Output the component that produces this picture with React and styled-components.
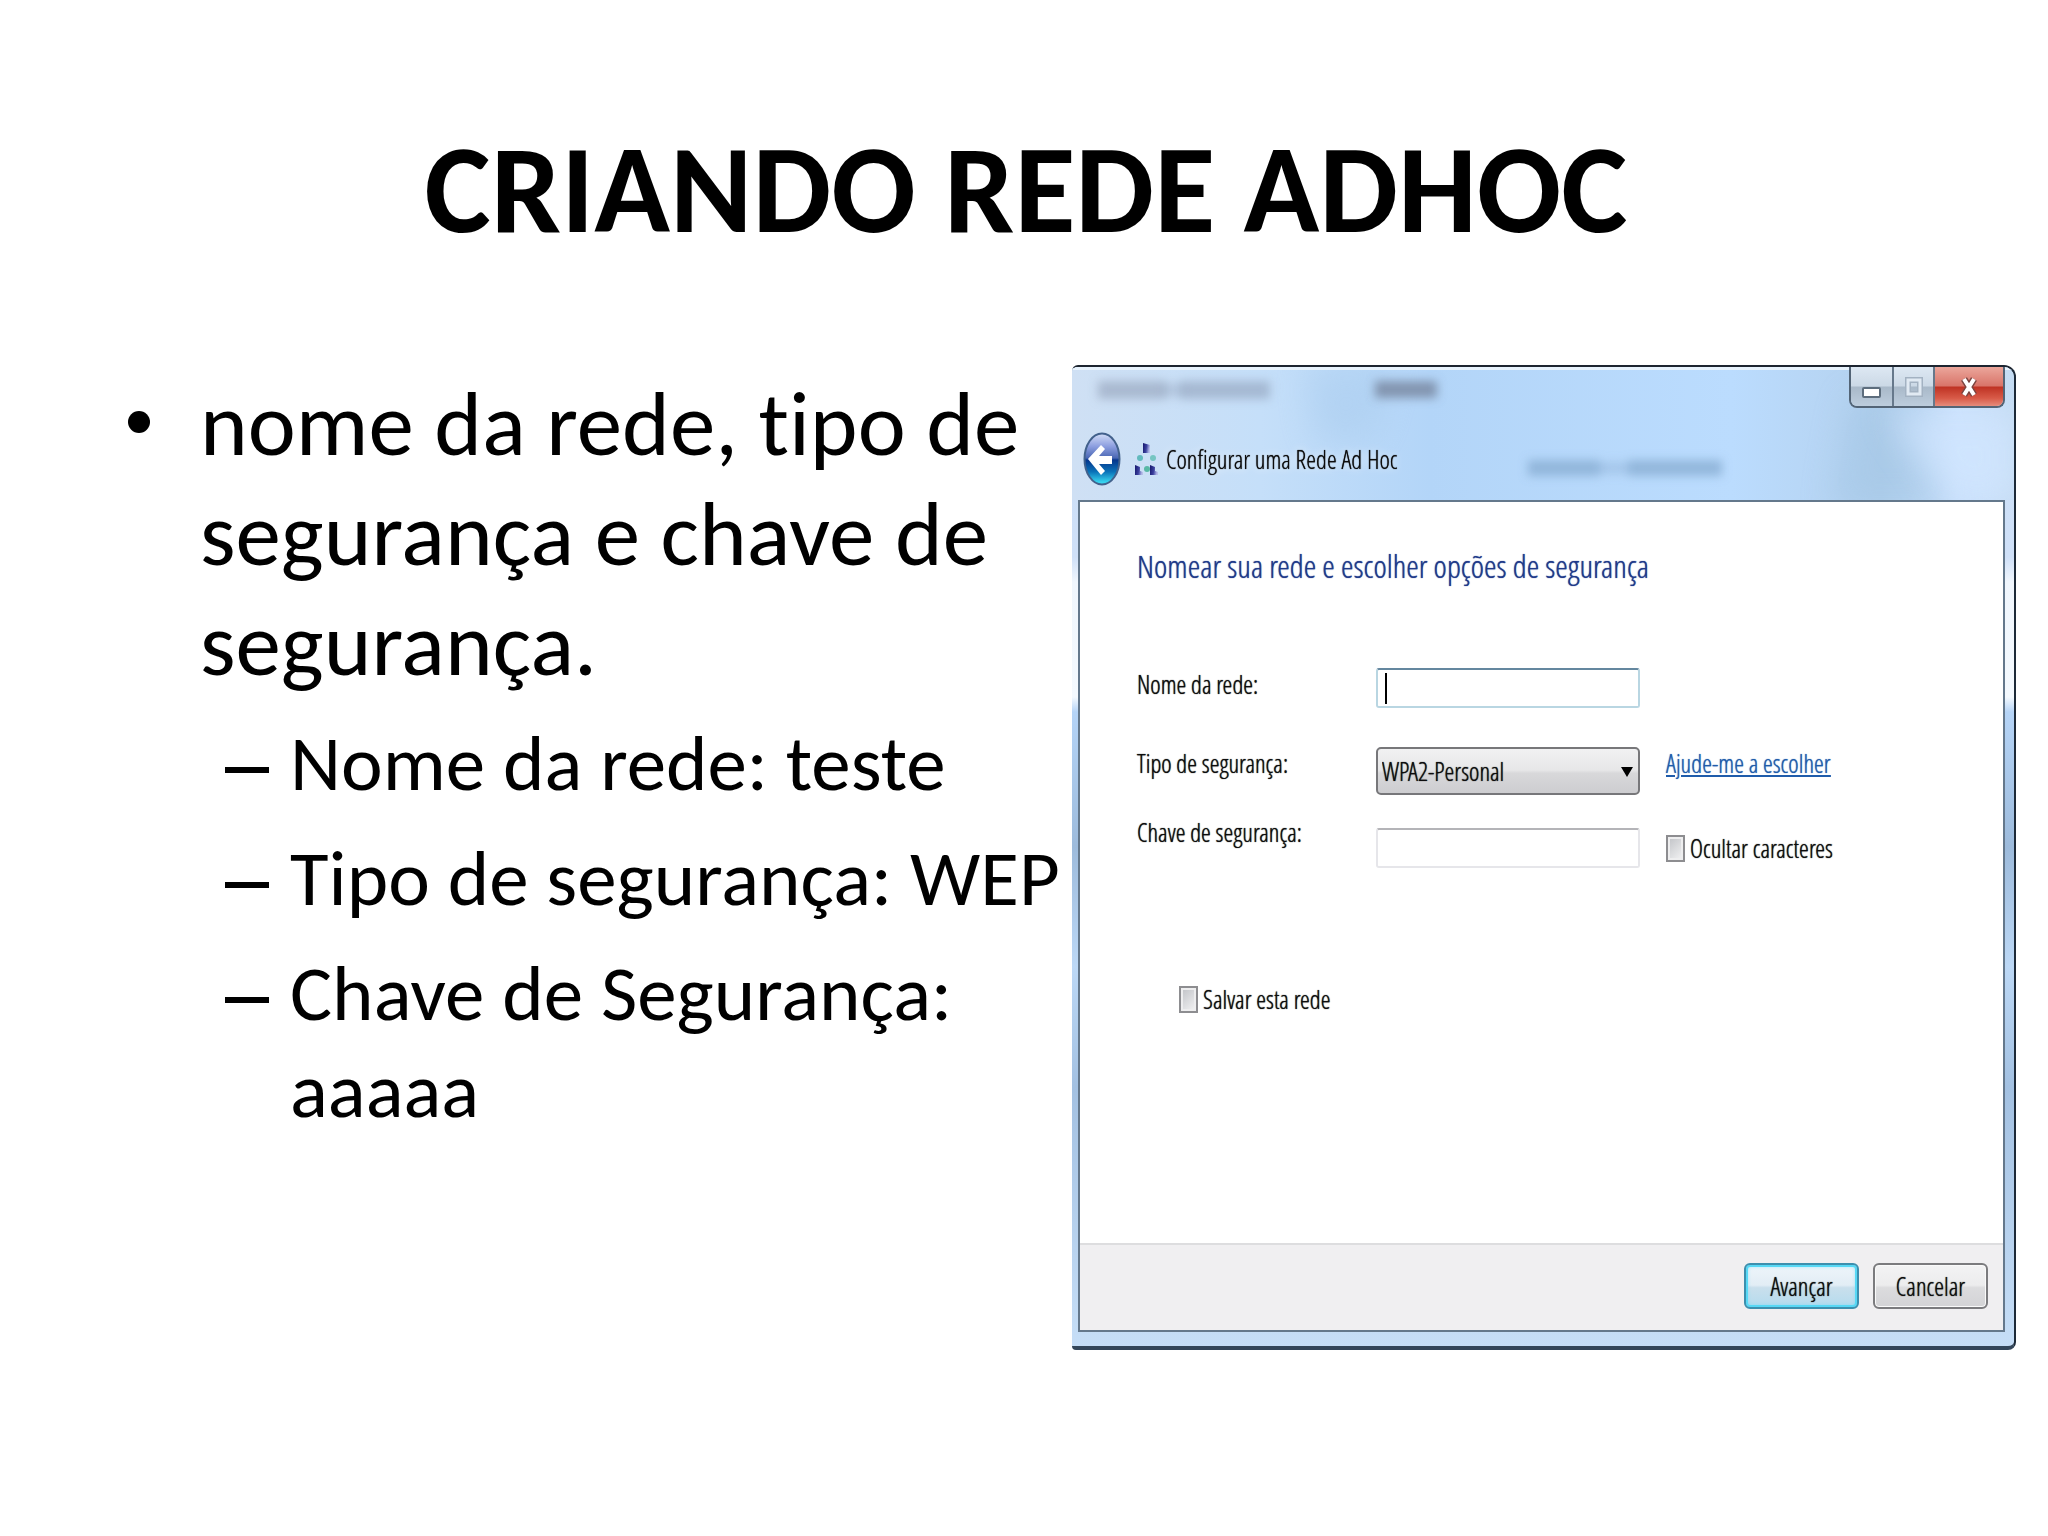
import React from "react";
import styled, { createGlobalStyle, css } from "styled-components";

const GlobalStyle = createGlobalStyle`
  * {
    box-sizing: border-box;
  }
  body {
    margin: 0;
    background: #ffffff;
    color: #000000;
    font-family: Carlito, Lato, sans-serif;
    font-variant-ligatures: none;
  }
`;

const uiFont = css`
  font-family: "Open Sans Condensed Light", "Open Sans Condensed", "Open Sans", sans-serif;
  font-size: 25px;
  line-height: 28px;
  font-weight: 300;
  text-shadow: 0 0 1px currentColor;
`;

const Slide = styled.main`
  min-height: 100vh;
  padding: 120px 32px 120px 128px;
`;

const Title = styled.h1`
  margin: 0 92px 105px 0;
  text-align: center;
  font-size: 125px;
  line-height: 140px;
  font-weight: 700;
`;

const Columns = styled.div`
  display: grid;
  grid-template-columns: minmax(0, 1fr) minmax(0, 1fr);
  align-items: start;
`;

const Topics = styled.ul`
  margin: 0;
  padding: 4px 0 0;
  list-style: none;
  font-size: 91px;
  line-height: 110px;
`;

const Topic = styled.li`
  display: grid;
  grid-template-columns: 72px minmax(0, 1fr);
`;

const Dot = styled.span`
  width: 22px;
  height: 22px;
  margin-top: 42px;
  border-radius: 50%;
  background: #000000;
`;

const SubTopics = styled.ul`
  margin: 0;
  padding: 16px 0 0 97px;
  list-style: none;
  font-size: 79px;
  line-height: 97px;
`;

const SubTopic = styled.li`
  display: grid;
  grid-template-columns: 65px minmax(0, 1fr);
  margin-bottom: 18px;
`;

const Dash = styled.span`
  width: 44px;
  height: 6px;
  margin-top: 52px;
  background: #000000;
`;

const SubText = styled.span`
  white-space: pre-line;
`;

const Dialog = styled.section`
  ${uiFont}
  position: relative;
  display: flex;
  flex-direction: column;
  overflow: hidden;
  padding: 0 9px 14px 6px;
  border-top: 2px solid #1d2530;
  border-right: 2px solid #1d2a38;
  border-bottom: 4px solid #33465a;
  border-radius: 6px 12px 8px 4px;
  color: #0c0c0c;
  background: linear-gradient(
    #c9dff6 0,
    #cfe0f8 190px,
    #f0f6fd 215px,
    #f4f9fe 330px,
    #b5d4f7 345px,
    #9dbbdc 480px,
    #bcd8f6 600px,
    #a3c1e2 720px,
    #c6def7 100%
  );
`;

const Glass = styled.svg`
  position: absolute;
  top: 0;
  left: 0;
  width: 100%;
  height: 133px;
`;

const TitleBar = styled.header`
  position: relative;
  height: 133px;
`;

const WindowButtons = styled.div`
  position: absolute;
  top: 0;
  right: 0;
  display: flex;
  height: 41px;
  overflow: hidden;
  border: 2px solid #536476;
  border-top: 0;
  border-radius: 0 0 8px 8px;
`;

const WindowButton = styled.button`
  display: grid;
  place-items: center;
  width: ${(p) => (p.$close ? "70px" : "41px")};
  padding: 0;
  border: 0;
  border-left: ${(p) => (p.$first ? "0" : "2px solid #66788b")};
  background: ${(p) =>
    p.$close
      ? "linear-gradient(#eba69b 0, #d9756a 48%, #bf3324 52%, #d85a48 80%, #e58c7c 100%)"
      : "linear-gradient(#dde8f3 0, #ccd9e6 48%, #a9b9c9 52%, #bdcddd 100%)"};
`;

const WizardTitle = styled.div`
  display: flex;
  align-items: center;
  padding: 65px 0 0 5px;
`;

const BackButton = styled.button`
  width: 38px;
  height: 54px;
  padding: 0;
  border: 0;
  background: none;
`;

const NetworkIcon = styled.svg`
  margin: 0 7px 0 14px;
`;

const WizardName = styled.span`
  text-shadow: 0 0 1px currentColor, 0 0 8px #ffffff;
`;

const Pane = styled.form`
  position: relative;
  display: flex;
  flex-direction: column;
  border: 2px solid #64788c;
  background: #ffffff;
`;

const PaneBody = styled.div`
  padding: 46px 57px 0 57px;
  min-height: 741px;
`;

const Heading = styled.h2`
  margin: 0 0 84px;
  color: #1f3a8a;
  font-size: 32px;
  line-height: 36px;
  font-weight: 300;
`;

const Field = styled.div`
  display: grid;
  grid-template-columns: 239px 264px 1fr;
  align-items: start;
  margin-bottom: ${(p) => p.$after}px;
`;

const FieldLabel = styled.label`
  padding-top: ${(p) => (p.$raised ? "0" : "2px")};
`;

const TextBox = styled.input`
  ${uiFont}
  width: 100%;
  height: 40px;
  margin-top: ${(p) => (p.$active ? "0" : "10px")};
  padding: 0 8px;
  outline: 0;
  border: 2px solid ${(p) => (p.$active ? "#b9d6e2" : "#e6e6ea")};
  border-top-color: ${(p) => (p.$active ? "#64879f" : "#b4b4b8")};
  border-radius: 3px;
  background: ${(p) =>
    p.$active
      ? "linear-gradient(#000000, #000000) 7px 3px / 2px 31px no-repeat #ffffff"
      : "#ffffff"};
`;

const SelectBox = styled.div`
  position: relative;
`;

const Select = styled.select`
  ${uiFont}
  appearance: none;
  width: 100%;
  height: 48px;
  padding: 0 30px 0 4px;
  border: 2px solid #77777a;
  border-radius: 5px;
  color: #0c0c0c;
  background: linear-gradient(#f1f1f2 0, #e7e7e8 48%, #d8d8da 55%, #cdcdd0 100%);
`;

const SelectArrow = styled.svg`
  position: absolute;
  top: 20px;
  right: 7px;
  pointer-events: none;
`;

const HelpLink = styled.a`
  justify-self: start;
  margin: 2px 0 0 26px;
  color: #1f5cab;
`;

const Check = styled.label`
  display: flex;
  align-items: center;
  gap: 5px;
  margin: ${(p) => (p.$save ? "117px 0 0 42px" : "16px 0 0 26px")};
`;

const CheckBox = styled.input`
  appearance: none;
  flex: none;
  width: 19px;
  height: 27px;
  margin: 0;
  border: 2px solid #8d8d90;
  background: linear-gradient(135deg, #bfc1c5, #f4f4f5);
  box-shadow: inset 0 0 0 2px #eeeeef;
`;

const Footer = styled.footer`
  display: flex;
  justify-content: flex-end;
  gap: 14px;
  height: 87px;
  padding: 18px 15px 0;
  border-top: 2px solid #dddddf;
  background: #f0eff1;
`;

const Button = styled.button`
  ${uiFont}
  width: 115px;
  height: 46px;
  padding: 0;
  border: 2px solid ${(p) => (p.$primary ? "#3c8fae" : "#7b7b7e")};
  border-radius: 6px;
  color: #0c0c0c;
  background: ${(p) =>
    p.$primary
      ? "linear-gradient(#eef5fa 0, #e2edf5 48%, #c9dfec 54%, #b4dbee 100%)"
      : "linear-gradient(#f3f3f4 0, #ececed 48%, #dcdcde 54%, #d3d3d6 100%)"};
  box-shadow: ${(p) =>
    p.$primary ? "inset 0 0 0 2px #57d8f5, inset 0 0 5px #57d8f5" : "inset 0 0 0 1px #fafafa"};
`;

const subTopics = [
  "Nome da rede: teste",
  "Tipo de segurança: WEP",
  "Chave de Segurança:\naaaaa",
];

const GlassBackdrop = () => (
  <Glass viewBox="0 0 942 133" preserveAspectRatio="none" aria-hidden="true">
    <defs>
      <linearGradient id="glass">
        <stop offset="0" stopColor="#cfe0f4" />
        <stop offset="0.2" stopColor="#c5dff9" />
        <stop offset="0.38" stopColor="#b3d5f8" />
        <stop offset="0.7" stopColor="#bbdcfe" />
        <stop offset="0.86" stopColor="#b4d1ee" />
        <stop offset="0.94" stopColor="#cbe2fd" />
        <stop offset="1" stopColor="#c5dcf3" />
      </linearGradient>
      <filter id="soft" x="-20%" y="-80%" width="140%" height="260%">
        <feGaussianBlur stdDeviation="5" />
      </filter>
      <filter id="haze" x="-60%" y="-60%" width="220%" height="220%">
        <feGaussianBlur stdDeviation="16" />
      </filter>
    </defs>
    <rect width="942" height="133" fill="url(#glass)" />
    <path d="M232 0h90l-20 75h-60z" fill="#a4c8ea" opacity="0.4" filter="url(#haze)" />
    <path d="M780 30l70 0 30 110h-120z" fill="#9fc3e2" opacity="0.5" filter="url(#haze)" />
    <path d="M815 45l60 90h70V45z" fill="#d2e6ff" opacity="0.7" filter="url(#haze)" />
    <g filter="url(#soft)">
      <rect x="26" y="14" width="68" height="18" fill="#96a5bd" opacity="0.65" />
      <rect x="108" y="14" width="90" height="18" fill="#94a5be" opacity="0.65" />
      <rect x="90" y="16" width="22" height="14" fill="#94a5be" opacity="0.4" />
      <rect x="303" y="14" width="62" height="17" fill="#76869f" opacity="0.8" />
      <rect x="456" y="93" width="72" height="16" fill="#86abd0" opacity="0.75" />
      <rect x="528" y="95" width="28" height="12" fill="#86abd0" opacity="0.4" />
      <rect x="556" y="93" width="94" height="16" fill="#86abd0" opacity="0.75" />
    </g>
    <rect width="942" height="3" fill="#e8f3fd" />
  </Glass>
);

const BackIcon = () => (
  <svg width="38" height="54" viewBox="0 0 38 54" aria-hidden="true">
    <defs>
      <linearGradient id="orb" x2="0" y2="1">
        <stop offset="0" stopColor="#d3def7" />
        <stop offset="0.25" stopColor="#8d9fe0" />
        <stop offset="0.48" stopColor="#4a67b4" />
        <stop offset="0.52" stopColor="#05358c" />
        <stop offset="0.75" stopColor="#0a72b8" />
        <stop offset="0.95" stopColor="#37d3ee" />
      </linearGradient>
    </defs>
    <ellipse cx="19" cy="27" rx="17.5" ry="25.5" fill="url(#orb)" stroke="#42618c" strokeWidth="2" />
    <path d="M5 27L18 13l4 4-6 7h13v8H16l6 7-4 4z" fill="#ffffff" />
  </svg>
);

const AdHocIcon = () => (
  <NetworkIcon width="24" height="34" viewBox="0 0 24 34" aria-hidden="true">
    <defs>
      <linearGradient id="screen" x2="1" y2="0.2">
        <stop offset="0" stopColor="#15166b" />
        <stop offset="0.55" stopColor="#3b409e" />
        <stop offset="1" stopColor="#b7bdea" />
      </linearGradient>
    </defs>
    <path d="M8 1l7 2v8H8z" fill="url(#screen)" />
    <path d="M0 23l5 2v4l3 1v3H0z" fill="url(#screen)" />
    <path d="M15 23l5 2v4l3 1v3h-8z" fill="url(#screen)" />
    <circle cx="5" cy="16" r="3" fill="#62b9bd" />
    <circle cx="18" cy="16" r="3" fill="#75c5c2" />
    <circle cx="12" cy="27" r="3" fill="#58b8a5" />
  </NetworkIcon>
);

const NetworkDialog = () => (
  <Dialog>
    <GlassBackdrop />
    <TitleBar>
      <WindowButtons>
        <WindowButton type="button" $first aria-label="Minimizar">
          <svg width="20" height="30" viewBox="0 0 20 30">
            <rect x="1" y="16" width="17" height="9" rx="1" fill="#ffffff" stroke="#5d6d7d" strokeWidth="2" />
          </svg>
        </WindowButton>
        <WindowButton type="button" aria-label="Maximizar">
          <svg width="18" height="22" viewBox="0 0 18 22">
            <rect x="3" y="4" width="12" height="14" fill="none" stroke="#a3b2c2" strokeWidth="6" />
            <rect x="3" y="4" width="12" height="14" fill="none" stroke="#e1eaf3" strokeWidth="3" />
          </svg>
        </WindowButton>
        <WindowButton type="button" $close aria-label="Fechar">
          <svg width="20" height="24" viewBox="0 0 20 24">
            <path d="M5 4l10 16M15 4L5 20" stroke="#7c4541" strokeWidth="7" />
            <path d="M5 4l10 16M15 4L5 20" stroke="#ffffff" strokeWidth="4" />
          </svg>
        </WindowButton>
      </WindowButtons>
      <WizardTitle>
        <BackButton type="button" aria-label="Voltar">
          <BackIcon />
        </BackButton>
        <AdHocIcon />
        <WizardName>Configurar uma Rede Ad Hoc</WizardName>
      </WizardTitle>
    </TitleBar>
    <Pane onSubmit={(e) => e.preventDefault()}>
      <PaneBody>
        <Heading>Nomear sua rede e escolher opções de segurança</Heading>
        <Field $after={39}>
          <FieldLabel htmlFor="network-name">Nome da rede:</FieldLabel>
          <TextBox id="network-name" type="text" $active />
        </Field>
        <Field $after={23}>
          <FieldLabel htmlFor="security-type">Tipo de segurança:</FieldLabel>
          <SelectBox>
            <Select id="security-type" defaultValue="wpa2">
              <option value="wpa2">WPA2-Personal</option>
              <option value="wep">WEP</option>
            </Select>
            <SelectArrow width="12" height="10" viewBox="0 0 12 10" aria-hidden="true">
              <path d="M0 0h12L6 10z" fill="#000000" />
            </SelectArrow>
          </SelectBox>
          <HelpLink href="#ajuda">Ajude-me a escolher</HelpLink>
        </Field>
        <Field $after={0}>
          <FieldLabel htmlFor="security-key" $raised>
            Chave de segurança:
          </FieldLabel>
          <TextBox id="security-key" type="text" />
          <Check>
            <CheckBox type="checkbox" />
            Ocultar caracteres
          </Check>
        </Field>
        <Check $save>
          <CheckBox type="checkbox" />
          Salvar esta rede
        </Check>
      </PaneBody>
      <Footer>
        <Button type="submit" $primary>
          Avançar
        </Button>
        <Button type="button">Cancelar</Button>
      </Footer>
    </Pane>
  </Dialog>
);

const App = () => {
  return (
    <>
      <GlobalStyle />
      <Slide>
        <Title>CRIANDO REDE ADHOC</Title>
        <Columns>
          <div>
            <Topics>
              <Topic>
                <Dot />
                <span>nome da rede, tipo de segurança e chave de segurança.</span>
              </Topic>
            </Topics>
            <SubTopics>
              {subTopics.map((text) => (
                <SubTopic key={text}>
                  <Dash />
                  <SubText>{text}</SubText>
                </SubTopic>
              ))}
            </SubTopics>
          </div>
          <NetworkDialog />
        </Columns>
      </Slide>
    </>
  );
};

export default App;
